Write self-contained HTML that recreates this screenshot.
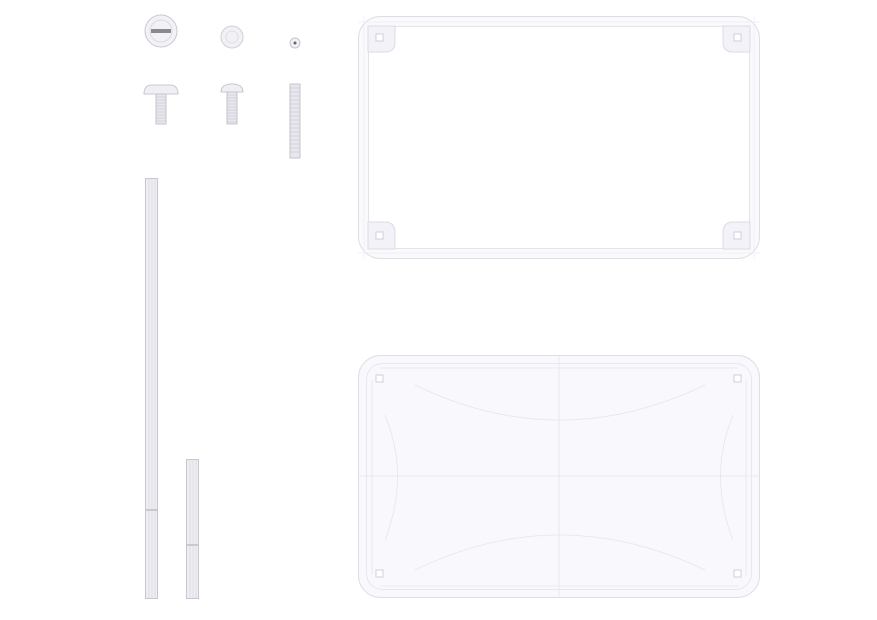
<!DOCTYPE html>
<html><head><meta charset="utf-8"><style>
html,body{margin:0;padding:0;background:#fff;width:877px;height:620px;overflow:hidden}
svg{display:block}
</style></head><body>
<svg width="877" height="620" viewBox="0 0 877 620" xmlns="http://www.w3.org/2000/svg" fill="none">
<!-- screw heads top view -->
<circle cx="161" cy="31" r="16" fill="#f2f1f6" stroke="#c9c8d2"/>
<circle cx="161" cy="31" r="11" stroke="#dcdbe3"/>
<rect x="151" y="29" width="20" height="4" fill="#8a8a8e"/>
<circle cx="232" cy="37" r="11" fill="#f2f1f6" stroke="#cfcfd8"/>
<circle cx="232" cy="37" r="6" stroke="#e0dfe6"/>
<circle cx="295" cy="43" r="5" fill="#f2f1f6" stroke="#c4c4cc"/>
<circle cx="295" cy="43" r="1.5" fill="#666"/>
<!-- screw side views -->
<path d="M144 94 Q144 85 152 85 L170 85 Q178 85 178 94 Z" fill="#f0eff4" stroke="#c9c8d2"/>
<rect x="156" y="94" width="10" height="30" fill="#e8e7ee" stroke="#c4c4cc"/>
<g stroke="#bdbdc6" stroke-width="0.6">
<path d="M156 97H166M156 100H166M156 103H166M156 106H166M156 109H166M156 112H166M156 115H166M156 118H166M156 121H166"/>
</g>
<path d="M221 92 Q221 84 232 84 Q243 84 243 92 Z" fill="#f0eff4" stroke="#c9c8d2"/>
<rect x="227" y="92" width="10" height="32" fill="#e8e7ee" stroke="#c4c4cc"/>
<g stroke="#bdbdc6" stroke-width="0.6">
<path d="M227 95H237M227 98H237M227 101H237M227 104H237M227 107H237M227 110H237M227 113H237M227 116H237M227 119H237M227 122H237"/>
</g>
<rect x="290" y="84" width="10" height="74" fill="#e8e7ee" stroke="#c4c4cc"/>
<g stroke="#bdbdc6" stroke-width="0.6">
<path d="M290 88H300M290 92H300M290 96H300M290 100H300M290 104H300M290 108H300M290 112H300M290 116H300M290 120H300M290 124H300M290 128H300M290 132H300M290 136H300M290 140H300M290 144H300M290 148H300M290 152H300"/>
</g>
<!-- rods -->
<rect x="145.5" y="178.5" width="12" height="420" fill="#eeedf3" stroke="#c8c7d0"/>
<path d="M149 179V598M152 179V598M155 179V598" stroke="#dddce4" stroke-width="0.8"/>
<path d="M146 510H157" stroke="#aaa"/>
<rect x="186.5" y="459.5" width="12" height="139" fill="#eeedf3" stroke="#c8c7d0"/>
<path d="M190 460V598M193 460V598M196 460V598" stroke="#dddce4" stroke-width="0.8"/>
<path d="M187 545H198" stroke="#aaa"/>
<!-- top frame -->
<rect x="358.5" y="16.5" width="401" height="242" rx="22" fill="#faf9fc" stroke="#dedde8"/>
<rect x="368.5" y="26.5" width="381" height="222" rx="14" fill="#fff" stroke="#e4e3ec"/>
<path d="M358 22H760M358 253H760M364 16V259M754 16V259" stroke="#eeedf4" stroke-width="0.7"/>
<g fill="#f3f2f8" stroke="#dcdbe6">
<path d="M368 26H395V42Q395 52 385 52H368Z"/>
<path d="M750 26H723V42Q723 52 733 52H750Z"/>
<path d="M368 249H395V233Q395 222 385 222H368Z"/>
<path d="M750 249H723V233Q723 222 733 222H750Z"/>
</g>
<g fill="#fff" stroke="#cfcfd8">
<rect x="376" y="34" width="7" height="7"/><rect x="734" y="34" width="7" height="7"/>
<rect x="376" y="232" width="7" height="7"/><rect x="734" y="232" width="7" height="7"/>
</g>
<!-- bottom panel -->
<rect x="358.5" y="355.5" width="401" height="242" rx="22" fill="#f9f8fc" stroke="#dedde8"/>
<rect x="366.5" y="363.5" width="385" height="226" rx="16" stroke="#e8e7ef"/>
<g stroke="#e6e5ee" stroke-width="0.8">
<path d="M358 476H760M559 356V598"/>
<path d="M415 385Q559 455 705 385M415 570Q559 500 705 570"/>
<path d="M385 415Q410 476 385 540M733 415Q708 476 733 540"/>
<path d="M380 368H738M380 586H738M372 380V575M746 380V575"/>
</g>
<g fill="#fff" stroke="#cfcfd8">
<rect x="376" y="375" width="7" height="7"/><rect x="734" y="375" width="7" height="7"/>
<rect x="376" y="570" width="7" height="7"/><rect x="734" y="570" width="7" height="7"/>
</g>
</svg>
</body></html>
